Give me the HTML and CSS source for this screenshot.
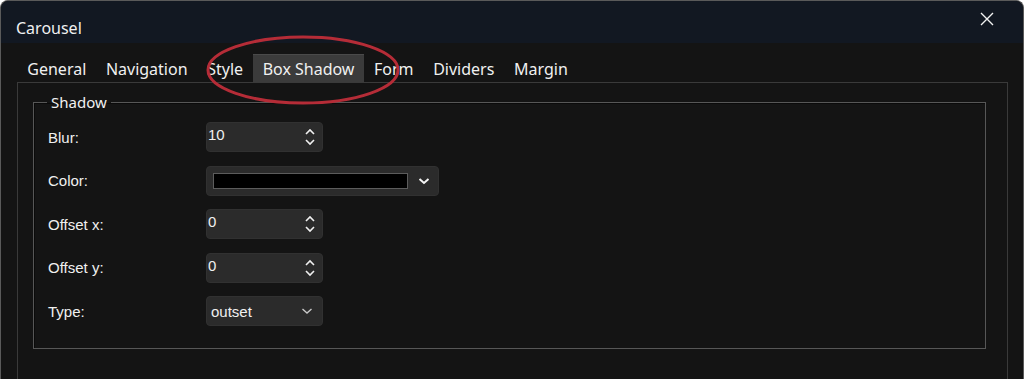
FILE: index.html
```html
<!DOCTYPE html>
<html lang="en">

<head>
    <meta charset="UTF-8">
    <meta name="viewport" content="width=device-width, initial-scale=1.0">
    <title>Carousel</title>

    <link rel="stylesheet" href="styles.css">

</head>

<body>
    <div class="window">
        <div class="titlebar">
            <span class="title">Carousel</span>
            <span class="close">
                <svg width="14" height="14" viewBox="0 0 14 14">
                    <path d="M1 1 L13 13 M13 1 L1 13" stroke="#f2f2f2" stroke-width="1.4" fill="none" />
                </svg>
            </span>
        </div>

        <div class="content">
            <div class="tabs">
                <span class="tab">General</span>
                <span class="tab">Navigation</span>
                <span class="tab">Style</span>
                <span class="tab active">Box Shadow</span>
                <span class="tab">Form</span>
                <span class="tab">Dividers</span>
                <span class="tab">Margin</span>
            </div>

            <div class="panel">
                <fieldset class="group">
                    <legend>Shadow</legend>

                    <div class="row">
                        <span class="label">Blur:</span>
                        <div class="field spin">
                            <span class="value">10</span>
                            <svg class="arrows" width="10" height="18" viewBox="0 0 10 18">
                                <path d="M1 6 L5 2 L9 6 M1 12 L5 16 L9 12" stroke="#f0f0f0" stroke-width="1.6" fill="none" />
                            </svg>
                        </div>
                    </div>

                    <div class="row">
                        <span class="label">Color:</span>
                        <div class="field color">
                            <span class="swatch"></span>
                            <svg class="chevron" width="12" height="8" viewBox="0 0 12 8">
                                <path d="M1.5 2 L6 6 L10.5 2" stroke="#f4f4f4" stroke-width="2" fill="none" />
                            </svg>
                        </div>
                    </div>

                    <div class="row">
                        <span class="label">Offset x:</span>
                        <div class="field spin">
                            <span class="value">0</span>
                            <svg class="arrows" width="10" height="18" viewBox="0 0 10 18">
                                <path d="M1 6 L5 2 L9 6 M1 12 L5 16 L9 12" stroke="#f0f0f0" stroke-width="1.6" fill="none" />
                            </svg>
                        </div>
                    </div>

                    <div class="row">
                        <span class="label">Offset y:</span>
                        <div class="field spin">
                            <span class="value">0</span>
                            <svg class="arrows" width="10" height="18" viewBox="0 0 10 18">
                                <path d="M1 6 L5 2 L9 6 M1 12 L5 16 L9 12" stroke="#f0f0f0" stroke-width="1.6" fill="none" />
                            </svg>
                        </div>
                    </div>

                    <div class="row">
                        <span class="label">Type:</span>
                        <div class="field select">
                            <span class="value">outset</span>
                            <svg class="chevron" width="12" height="8" viewBox="0 0 12 8">
                                <path d="M1.5 2 L6 6 L10.5 2" stroke="#c8c8c8" stroke-width="1.4" fill="none" />
                            </svg>
                        </div>
                    </div>
                </fieldset>
            </div>
        </div>

        <!-- red marker round the active tab -->
        <svg class="marker" width="210" height="80" viewBox="0 0 210 80">
            <ellipse cx="103" cy="39" rx="95" ry="33" stroke="#b52c37" stroke-width="3" fill="none" />
        </svg>
    </div>
</body>

</html>
```

FILE: styles.css
```css
body {
    margin: 0;
    background-color: #ffffff;
    overflow: hidden;
}

.window {
    position: relative;
    width: 1022px;
    height: 100vh;
    border: 1px solid #5a5a5a;
    border-bottom: none;
    border-radius: 8px 8px 0 0;
    background-color: #141414;
    overflow: hidden;
    font-family: "Noto Sans", "Open Sans", sans-serif;
    color: #f0f0f0;
}

/* title bar */
.titlebar {
    display: flex;
    align-items: center;
    justify-content: space-between;
    height: 42px;
    padding: 0 29px 0 15px;
    background-color: #121822;
}

.title {
    font-size: 16px;
    padding-top: 12px;
}

.close {
    display: flex;
    margin-top: -6px;
}

/* tabs */
.content {
    padding: 11px 15px 0 16px;
}

.tabs {
    display: flex;
    height: 28px;
    padding-left: 0.5px;
}

.tab {
    padding: 2px 9.8px 0 9.8px;
    font-size: 16px;
    line-height: 26px;
    white-space: nowrap;
}

.tab.active {
    background-color: #3b3b3b;
    border-top: 1px solid #4a4a4a;
    padding-top: 1px;
}

.panel {
    height: 320px;
    border: 1px solid #3a3a3a;
    padding: 9px 21px 0 15px;
}

/* group box */
.group {
    margin: 0;
    padding: 10px 14px 22px 14px;
    border: 1px solid #575757;
    box-shadow: inset 1px 1px 0 #0a0a0a;
    font-family: "Liberation Sans", Arial, sans-serif;
}

.group legend {
    padding: 0 4px;
    margin-left: -1px;
    font-family: "Noto Sans", "Open Sans", sans-serif;
    font-size: 15px;
    line-height: 20px;
}

.row {
    display: flex;
    align-items: center;
    height: 30px;
    margin-bottom: 13.5px;
}

.row:last-child {
    margin-bottom: 0;
}

.label {
    width: 158px;
    font-size: 15px;
}

.field {
    display: flex;
    align-items: center;
    height: 28px;
    border: 1px solid #313131;
    border-radius: 4px;
    background-color: #2b2b2b;
    box-sizing: content-box;
}

.spin {
    width: 115px;
    justify-content: space-between;
    align-items: flex-start;
}

.spin .value {
    padding: 3px 0 0 1px;
    font-size: 15px;
}

.spin .arrows {
    margin: 5px 7px 0 0;
}

.color {
    width: 231px;
}

.swatch {
    width: 193px;
    height: 14px;
    margin-left: 6px;
    border: 1px solid #5c5c5c;
    background-color: #000000;
}

.color .chevron {
    margin-left: 10px;
}

.select {
    width: 115px;
    justify-content: space-between;
}

.select .value {
    padding-left: 4px;
    font-size: 15px;
}

.select .chevron {
    margin-right: 9px;
}

/* annotation */
.marker {
    position: absolute;
    left: 199px;
    top: 30px;
}
```
